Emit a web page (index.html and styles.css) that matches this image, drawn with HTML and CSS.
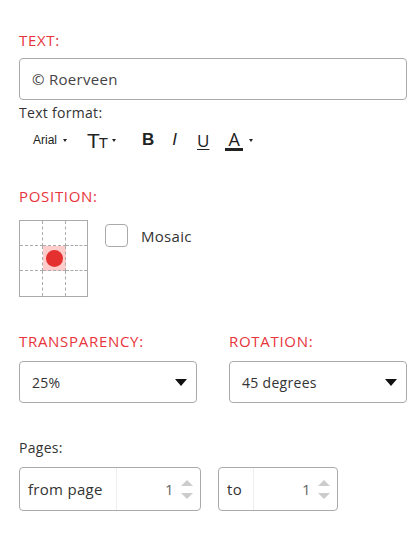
FILE: index.html
```html
<!DOCTYPE html>
<html>
<head>
<meta charset="utf-8">
<link rel="stylesheet" href="styles.css">
</head>
<body>
<div class="panel">
  <div class="label red first">TEXT:</div>
  <div class="textbox">© Roerveen</div>
  <div class="label small">Text format:</div>
  <div class="toolbar">
    <span class="tool font-name">Arial<span class="caret"></span></span>
    <span class="tool size"><span class="big-t">T</span><span class="small-t">T</span><span class="caret"></span></span>
    <span class="tool bold">B</span>
    <span class="tool italic">I</span>
    <span class="tool underline">U</span>
    <span class="tool color"><span class="color-a">A</span><span class="caret"></span></span>
  </div>

  <div class="label red section">POSITION:</div>
  <div class="position-row">
    <div class="pos-grid">
      <div class="cell"></div><div class="cell"></div><div class="cell"></div>
      <div class="cell"></div><div class="cell active"><span class="dot"></span></div><div class="cell"></div>
      <div class="cell"></div><div class="cell"></div><div class="cell"></div>
    </div>
    <label class="mosaic"><span class="checkbox"></span><span>Mosaic</span></label>
  </div>

  <div class="two-col section">
    <div class="col">
      <div class="label red">TRANSPARENCY:</div>
      <div class="select"><span>25%</span><span class="tri"></span></div>
    </div>
    <div class="col">
      <div class="label red">ROTATION:</div>
      <div class="select"><span>45 degrees</span><span class="tri"></span></div>
    </div>
  </div>

  <div class="label pages">Pages:</div>
  <div class="pages-row">
    <div class="group from">
      <span class="addon">from page</span>
      <span class="num"><span class="val">1</span><span class="spin"><span class="up"></span><span class="down"></span></span></span>
    </div>
    <div class="group to">
      <span class="addon">to</span>
      <span class="num"><span class="val">1</span><span class="spin"><span class="up"></span><span class="down"></span></span></span>
    </div>
  </div>
</div>
</body>
</html>
```

FILE: styles.css
```css
* { box-sizing: border-box; }
body {
  margin: 0;
  background: #fff;
  font-family: "Open Sans", "Lato", sans-serif;
  color: #333;
  letter-spacing: 0.3px;
}
.panel {
  width: 416px;
  padding: 30px 9px 20px 19px;
}
.label {
  font-size: 14px;
  line-height: 20px;
  height: 20px;
  white-space: nowrap;
}
.red {
  color: #e8343c;
  font-size: 15px;
  letter-spacing: 0.7px;
}
.textbox {
  margin-top: 8px;
  height: 42px;
  border: 1px solid #aaa;
  border-radius: 4px;
  padding: 0 12px;
  font-size: 15px;
  line-height: 40px;
  color: #444;
}
.small { margin-top: 3px; color: #333; }
.toolbar {
  margin-top: 5px;
  height: 24px;
  display: flex;
  align-items: center;
  padding-left: 14px;
  color: #222;
  letter-spacing: 0;
}
.tool { display: inline-flex; align-items: center; }
.caret {
  display: inline-block;
  width: 0; height: 0;
  border-left: 2.5px solid transparent;
  border-right: 2.5px solid transparent;
  border-top: 3px solid #222;
  margin-left: 6px;
}
.font-name {
  font-family: "Liberation Sans", Arial, sans-serif;
  font-size: 12px;
}
.size { margin-left: 20px; }
.big-t { font-family: "Liberation Sans", Arial, sans-serif; font-size: 21px; line-height: 1; }
.small-t { font-family: "Liberation Sans", Arial, sans-serif; font-size: 15px; line-height: 1; margin-top: 4px; margin-left: -1px; }
.size .caret { margin-left: 4px; }
.bold {
  margin-left: 26px;
  font-family: "Liberation Sans", Arial, sans-serif;
  font-weight: bold;
  font-size: 17px;
}
.italic {
  margin-left: 18px;
  font-family: "Liberation Sans", Arial, sans-serif;
  font-style: italic;
  font-size: 17px;
}
.underline {
  margin-left: 20px;
  font-family: "Open Sans", sans-serif;
  font-size: 17px;
  text-decoration: underline;
  text-decoration-thickness: 1px;
  text-underline-offset: 2px;
}
.color { margin-left: 16px; }
.color-a {
  font-family: "Open Sans", sans-serif;
  font-size: 18px;
  line-height: 18px;
  padding: 0 3px;
  border-bottom: 3px solid #222;
}
.section { margin-top: 34px; }
.position-row {
  margin-top: 14px;
  display: flex;
  align-items: flex-start;
}
.pos-grid {
  width: 69px;
  height: 77px;
  border: 1px solid #aaa;
  display: grid;
  grid-template-columns: 23px 23px 21px;
  grid-template-rows: 25px 25px 25px;
}
.cell {
  border-right: 1px dashed #aaa;
  border-bottom: 1px dashed #aaa;
  display: flex;
  align-items: center;
  justify-content: center;
}
.cell:nth-child(3n) { border-right: none; }
.cell:nth-child(n+7) { border-bottom: none; }
.cell.active { background: #ffcccc; }
.dot {
  width: 17px; height: 17px;
  border-radius: 50%;
  background: #e53030;
}
.mosaic {
  margin-left: 17px;
  margin-top: 4px;
  display: flex;
  align-items: center;
  font-size: 15px;
  color: #333;
}
.checkbox {
  width: 23px; height: 23px;
  border: 1px solid #aaa;
  border-radius: 4px;
  margin-right: 13px;
}
.two-col {
  display: flex;
  gap: 32px;
}
.col { flex: 1; }
.select {
  margin-top: 10px;
  height: 42px;
  border: 1px solid #aaa;
  border-radius: 4px;
  display: flex;
  align-items: center;
  justify-content: space-between;
  padding: 0 9px 0 12px;
  font-size: 14px;
  color: #333;
}
.tri {
  width: 0; height: 0;
  border-left: 6px solid transparent;
  border-right: 6px solid transparent;
  border-top: 7px solid #111;
}
.pages { margin-top: 35px; }
.pages-row {
  margin-top: 9px;
  display: flex;
  gap: 17px;
}
.group {
  height: 44px;
  border: 1px solid #aaa;
  border-radius: 4px;
  display: flex;
  overflow: hidden;
  font-size: 15px;
}
.group.from { width: 182px; }
.group.to { width: 120px; }
.addon {
  display: flex;
  align-items: center;
  padding-left: 8px;
  border-right: 1px solid #eee;
  color: #333;
}
.from .addon { width: 97px; }
.to .addon { width: 35px; }
.num {
  flex: 1;
  display: flex;
  align-items: center;
  justify-content: flex-end;
  padding-right: 7px;
}
.val { color: #666; margin-right: 7px; }
.spin {
  display: flex;
  flex-direction: column;
  gap: 7px;
}
.up, .down {
  width: 0; height: 0;
  border-left: 6px solid transparent;
  border-right: 6px solid transparent;
}
.up { border-bottom: 6px solid #ccc; }
.down { border-top: 6px solid #ccc; }
```
